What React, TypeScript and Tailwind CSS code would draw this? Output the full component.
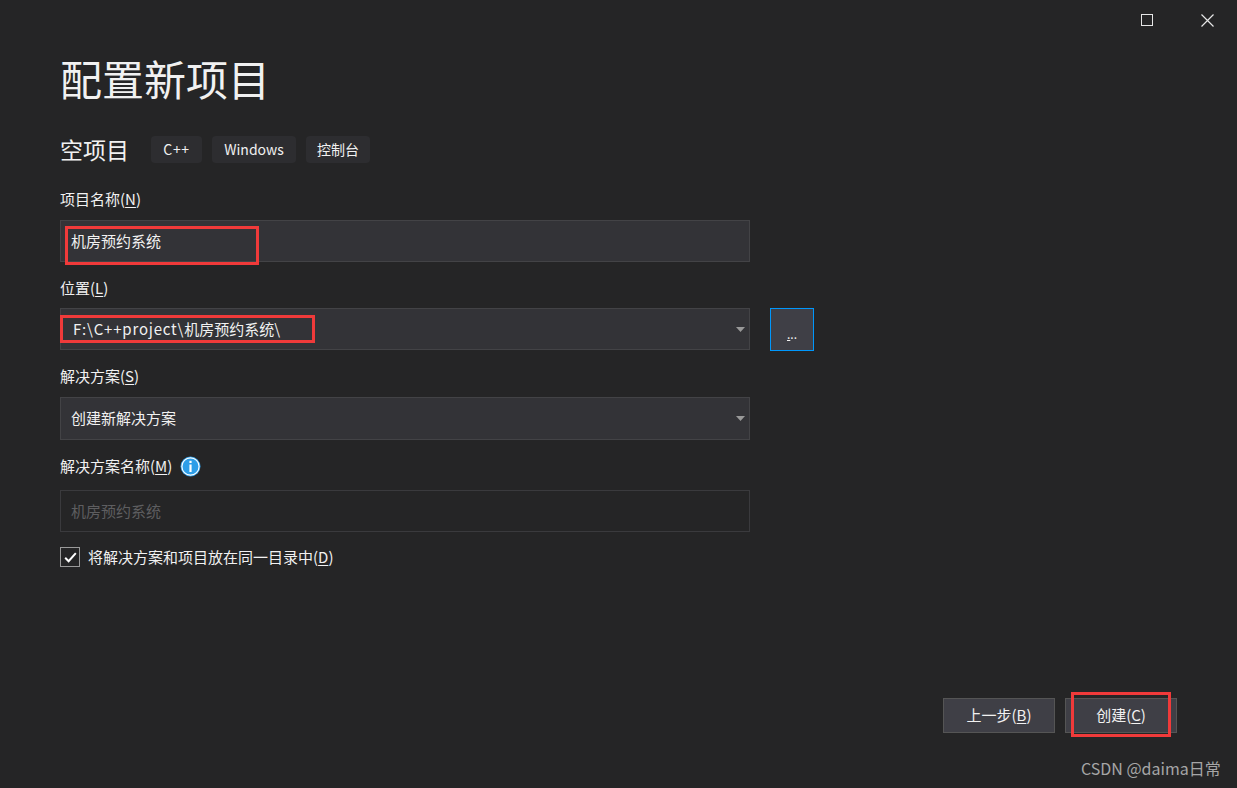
import React from "react";

const font = { fontFamily: '"Noto Sans CJK SC", "Noto Sans", sans-serif' };

function Arrow() {
  return (
    <svg width="9" height="5" viewBox="0 0 9 5" className="shrink-0">
      <path d="M0 0 H9 L4.5 5 Z" fill="#999999" />
    </svg>
  );
}

function Label({ text, k, rest }: { text: string; k: string; rest?: React.ReactNode }) {
  return (
    <div className="flex items-center h-[20px] text-[15px] leading-[20px] text-[#f1f1f1]">
      <span>
        {text}(<span className="underline underline-offset-2">{k}</span>)
      </span>
      {rest}
    </div>
  );
}

export default function App() {
  return (
    <div
      className="relative w-[1237px] h-[788px] bg-[#252526] text-[#f1f1f1] flex flex-col overflow-hidden"
      style={font}
    >
      {/* window controls */}
      <div className="absolute top-0 right-0 flex">
        <div className="w-[60px] h-[40px] flex items-center justify-center">
          <div className="w-[12px] h-[12px] border border-[#e6e6e6]" />
        </div>
        <div className="w-[60px] h-[40px] flex items-center justify-center">
          <svg width="13" height="13" viewBox="0 0 13 13">
            <path d="M0.5 0.5 L12.5 12.5 M12.5 0.5 L0.5 12.5" stroke="#e6e6e6" strokeWidth="1.2" />
          </svg>
        </div>
      </div>

      <div className="flex flex-col pl-[60px] pt-[53px]">
        <div className="h-[50px] text-[42px] leading-[50px] font-normal">配置新项目</div>

        <div className="flex items-center h-[28px] mt-[32px]">
          <span className="text-[23px] leading-[28px] mr-[22px]">空项目</span>
          <div className="flex gap-[10px]">
            <span className="w-[51px] h-[27px] rounded-[4px] bg-[#2d2d30] flex items-center justify-center text-[14px] tracking-[0.6px]">C++</span>
            <span className="w-[84px] h-[27px] rounded-[4px] bg-[#2d2d30] flex items-center justify-center text-[14px]">Windows</span>
            <span className="w-[64px] h-[27px] rounded-[4px] bg-[#2d2d30] flex items-center justify-center text-[14px]">控制台</span>
          </div>
        </div>

        <div className="mt-[26px]">
          <Label text="项目名称" k="N" />
        </div>
        <div className="relative mt-[11px] w-[690px] h-[42px] bg-[#333337] border border-[#434346] flex items-center pl-[10px] text-[15px]">
          <span>机房预约系统</span>
          <div className="absolute left-[4px] top-[5px] w-[194px] h-[39px] border-[3px] border-[#f03a3a]" />
        </div>

        <div className="mt-[16px]">
          <Label text="位置" k="L" />
        </div>
        <div className="flex mt-[10px] items-start">
          <div className="relative w-[690px] h-[42px] bg-[#333337] border border-[#434346] flex items-center justify-between pl-[12px] pr-[4px] text-[15px]">
            <span>
              <span className="tracking-[0.8px]">F:\C++project\</span>机房预约系统\
            </span>
            <Arrow />
            <div className="absolute left-[-1px] top-[6px] w-[255px] h-[28px] border-[3px] border-[#f03a3a]" />
          </div>
          <div className="ml-[20px] w-[44px] h-[43px] bg-[#3f3f46] border border-[#0097fb] flex items-end justify-center pb-[10px] text-[12px] leading-[12px]">
            <span>
              <span className="underline">.</span>..
            </span>
          </div>
        </div>

        <div className="mt-[15px]">
          <Label text="解决方案" k="S" />
        </div>
        <div className="mt-[11px] w-[690px] h-[43px] bg-[#333337] border border-[#434346] flex items-center justify-between pl-[10px] pr-[4px] text-[15px]">
          <span>创建新解决方案</span>
          <Arrow />
        </div>

        <div className="mt-[16px]">
          <Label
            text="解决方案名称"
            k="M"
            rest={
              <svg width="21" height="21" viewBox="0 0 21 21" className="ml-[8px]">
                <circle cx="10.5" cy="10.5" r="10" fill="#2d9ee8" />
                <circle cx="10.5" cy="10.5" r="8.6" fill="none" stroke="#ffffff" strokeWidth="1.2" />
                <rect x="9.4" y="8.5" width="2.2" height="7.5" fill="#ffffff" />
                <rect x="9.4" y="4.8" width="2.2" height="2.2" fill="#ffffff" />
              </svg>
            }
          />
        </div>
        <div className="mt-[14px] w-[690px] h-[42px] bg-[#252526] border border-[#3a3a3d] flex items-center pl-[10px] text-[15px] text-[#5e5e60]">
          机房预约系统
        </div>

        <div className="flex items-center mt-[15px] h-[20px]">
          <div className="w-[20px] h-[20px] border border-[#9a9a9a] flex items-center justify-center">
            <svg width="13" height="11" viewBox="0 0 13 11">
              <path d="M1.2 5.8 L4.6 9.2 L11.8 1.2" fill="none" stroke="#ffffff" strokeWidth="2" />
            </svg>
          </div>
          <span className="ml-[8px] text-[15px] leading-[20px]">
            将解决方案和项目放在同一目录中(<span className="underline underline-offset-2">D</span>)
          </span>
        </div>
      </div>

      <div className="flex-1" />

      <div className="flex justify-end gap-[10px] pr-[60px] pb-[55px]">
        <div className="w-[112px] h-[35px] bg-[#3f3f46] border border-[#555555] flex items-center justify-center text-[15px]">
          <span>
            上一步(<span className="underline underline-offset-2">B</span>)
          </span>
        </div>
        <div className="relative w-[112px] h-[35px] bg-[#3f3f46] border border-[#555555] flex items-center justify-center text-[15px]">
          <span>
            创建(<span className="underline underline-offset-2">C</span>)
          </span>
          <div className="absolute left-[5px] top-[-7px] w-[100px] h-[45px] border-[3px] border-[#f03a3a]" />
        </div>
      </div>

      <div className="absolute left-[1081px] top-[757px] text-[16px] leading-[22px] text-[#a6a6a6]">
        CSDN @daima日常
      </div>
    </div>
  );
}
